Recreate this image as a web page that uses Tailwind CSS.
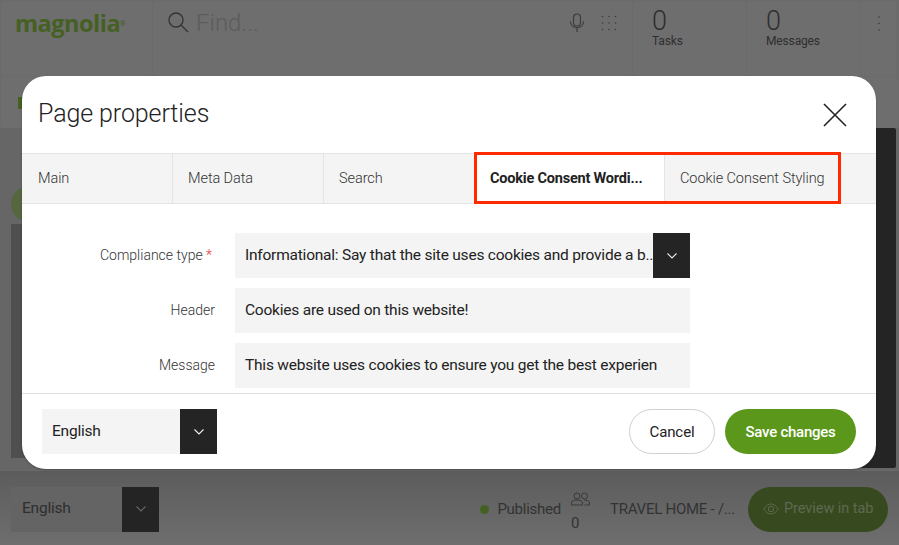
<!DOCTYPE html>
<html><head><meta charset="utf-8"><script src="https://cdn.jsdelivr.net/npm/@tailwindcss/browser@4"></script></head>
<body class="m-0">
<div class="relative w-[899px] h-[545px] overflow-hidden bg-[#6b6b6b] font-['Roboto',sans-serif] text-[#2e2e2e]">
  <!-- background app -->
  <div class="flex flex-col h-full">
    <div class="flex h-[76px] gap-px pt-px pl-px pr-[3px] shrink-0">
      <div class="w-[151px] rounded-[3px] bg-[#6e6e6e] pl-[14px] pt-[7px]">
        <span class="text-[23.500px] leading-[30px] font-bold tracking-[-0.5px] text-[#456023] font-['Open_Sans',sans-serif]">magnolia</span><span class="text-[7px] align-super text-[#456023]">®</span>
      </div>
      <div class="flex-1 flex items-start rounded-[3px] bg-[#6e6e6e] pl-[14px] pr-[15px] pt-[10px]">
        <svg class="w-[22px] h-[22px] mr-[7px]" viewBox="0 0 22 22" fill="none" stroke="#333" stroke-width="1.3"><circle cx="9" cy="9" r="7"/><path d="M14 14l7 7"/></svg>
        <span class="text-[24px] leading-[24px] font-light text-[#5c5c5c]">Find...</span>
        <div class="ml-auto flex items-start gap-[16px] pt-[2px]">
          <svg class="w-[16px] h-[20px]" viewBox="0 0 16 20" fill="none" stroke="#3d3d3d" stroke-width="1.2"><rect x="4.500" y="1" width="7" height="12" rx="3.500"/><path d="M1.500 8.500c0 8 13 8 13 0M8 15v4"/></svg>
          <svg class="w-[16px] h-[16px] mt-[2px]" viewBox="0 0 16 16" fill="#3d3d3d"><circle cx="1.500" cy="1.500" r=".8"/><circle cx="8" cy="1.500" r=".8"/><circle cx="14.500" cy="1.500" r=".8"/><circle cx="1.500" cy="8" r=".8"/><circle cx="8" cy="8" r=".8"/><circle cx="14.500" cy="8" r=".8"/><circle cx="1.500" cy="14.500" r=".8"/><circle cx="8" cy="14.500" r=".8"/><circle cx="14.500" cy="14.500" r=".8"/></svg>
        </div>
      </div>
      <div class="w-[113px] rounded-[3px] bg-[#6e6e6e] pl-[19px] pt-[8px]">
        <div class="text-[27px] leading-[25px] font-light">0</div><div class="text-[12px] leading-[15px] tracking-[-0.15px]">Tasks</div>
      </div>
      <div class="w-[113px] rounded-[3px] bg-[#6e6e6e] pl-[19px] pt-[8px]">
        <div class="text-[27px] leading-[25px] font-light">0</div><div class="text-[12px] leading-[15px] tracking-[-0.15px]">Messages</div>
      </div>
      <div class="w-[35px] rounded-[3px] bg-[#6e6e6e] flex justify-center pt-[15px]">
        <svg class="w-[2px] h-[15px]" viewBox="0 0 2 15" fill="#3d3d3d"><circle cx="1" cy="1" r=".8"/><circle cx="1" cy="7.500" r=".8"/><circle cx="1" cy="14" r=".8"/></svg>
      </div>
    </div>
    <div class="h-[51px] mt-px mx-px rounded-[3px] bg-[#6e6e6e] pl-[17px] pt-[20px] shrink-0">
      <div class="w-[10px] h-[12px] bg-[#456023]"></div>
    </div>
    <div class="flex-1 relative flex justify-end pr-[3px] pb-[2px] bg-[#666]">
      <div class="absolute left-[11px] top-[58px] w-[36px] h-[36px] rounded-full bg-[#56663f]"></div>
      <div class="absolute left-[11px] top-[96px] w-[40px] h-[234px] bg-[#4e504d]"></div>
      <div class="w-[40px] h-full rounded-[2px] bg-[#242424]"></div>
    </div>
    <div class="h-[75px] shrink-0 flex items-center pt-[2px] pl-[11px] pr-[11px] bg-gradient-to-b from-[#5c5c5c] to-[#6e6e6e] border-t border-[#6a6a6a]">
      <div class="flex h-[45px] w-[148px]">
        <div class="flex-1 bg-[#646464] pl-[11px] flex items-center text-[15.500px] tracking-[-0.22px]">English</div>
        <div class="w-[37px] bg-[#242424] flex items-center justify-center">
          <svg class="w-[10px] h-[6px]" viewBox="0 0 10 6" fill="none" stroke="#666" stroke-width="1.1"><path d="M.5.5L5 5 9.500.5"/></svg>
        </div>
      </div>
      <div class="ml-auto flex items-center text-[15px] tracking-[-0.25px]">
        <span class="w-[9px] h-[9px] rounded-full bg-[#456023] mr-[8px]"></span>
        <span class="text-[#333] mr-[10px]">Published</span>
        <div class="flex flex-col h-[45px] w-[20px] mr-[19px] leading-[18px] text-[#333] pt-[5px]">
          <svg class="w-[19px] h-[14px] mb-[8px] shrink-0" viewBox="0 0 19 14" fill="none" stroke="#3a3a3a" stroke-width="1"><circle cx="6" cy="4" r="3"/><circle cx="13.500" cy="4" r="3"/><path d="M.5 13v-2c0-2 2-3 5.500-3s5.500 1 5.500 3v2zM13 8c3.500 0 5.500 1 5.500 3v2h-5"/></svg>
          <span>0</span>
        </div>
        <span class="text-[#333] mr-[13px]">TRAVEL HOME - /...</span>
        <div class="flex items-center w-[140px] h-[45px] rounded-full bg-[#37491f] pl-[15px] text-[14.500px] tracking-[-0.05px] text-[#5e6a50]">
          <svg class="w-[16px] h-[12px] mr-[5px]" viewBox="0 0 16 12" fill="none" stroke="#5e6a50" stroke-width="1"><path d="M.8 6C3 2.500 5.300 1 8 1s5 1.500 7.200 5C13 9.500 10.700 11 8 11S3 9.500.8 6z"/><circle cx="8" cy="6" r="2.700"/></svg>
          Preview in tab
        </div>
      </div>
    </div>
  </div>

  <!-- modal -->
  <div class="absolute left-[22px] top-[76px] w-[854px] h-[393px] rounded-[24px] bg-white flex flex-col overflow-hidden shadow-[0_1px_2px_rgba(0,0,0,0.25)]">
    <div class="h-[77px] shrink-0 flex items-center justify-between pl-[16px] pr-[29px]">
      <h1 class="text-[25px] tracking-[-0.1px] font-light text-[#222] mb-[2px]">Page properties</h1>
      <svg class="w-[24px] h-[24px]" viewBox="0 0 24 24" fill="none" stroke="#222" stroke-width="1.600"><path d="M1 1l22 22M23 1L1 23"/></svg>
    </div>
    <div class="h-[51px] shrink-0 flex gap-px bg-[#e4e4e4] border-y border-[#e4e4e4] text-[14.500px] tracking-[-0.08px] font-light text-[#333]">
      <div class="w-[150px] bg-[#f4f4f4] pl-[16px] flex items-center">Main</div>
      <div class="w-[150px] bg-[#f4f4f4] pl-[15px] flex items-center">Meta Data</div>
      <div class="w-[150px] bg-[#f4f4f4] pl-[15px] flex items-center">Search</div>
      <div class="w-[190px] bg-white pl-[16px] flex items-center font-bold tracking-[-0.2px] text-[#222] -ml-px">Cookie Consent Wordi...</div>
      <div class="w-[175px] bg-[#f4f4f4] pl-[15px] flex items-center">Cookie Consent Styling</div>
      <div class="flex-1 bg-[#f4f4f4]"></div>
    </div>
    <div class="flex-1 pt-[29px] flex flex-col gap-[10px] overflow-hidden">
      <div class="flex items-center h-[45px]">
        <div class="w-[193px] pr-[3px] text-right text-[14px] font-light text-[#333]">Compliance type <span class="text-[#e53935]">*</span></div>
        <div class="ml-[20px] w-[455px] h-[45px] flex bg-[#f4f4f4]">
          <div class="flex-1 min-w-0 pl-[10px] pt-px flex items-center text-[15.500px] tracking-[-0.22px] text-[#222] whitespace-nowrap overflow-hidden">Informational: Say that the site uses cookies and provide a b...</div>
          <div class="w-[37px] shrink-0 bg-[#242424] flex items-center justify-center">
            <svg class="w-[10px] h-[6px]" viewBox="0 0 10 6" fill="none" stroke="#eee" stroke-width="1.1"><path d="M.5.5L5 5 9.500.5"/></svg>
          </div>
        </div>
      </div>
      <div class="flex items-center h-[45px]">
        <div class="w-[193px] text-right text-[14px] font-light text-[#333]">Header</div>
        <div class="ml-[20px] w-[455px] h-[45px] bg-[#f4f4f4] pl-[10px] pt-px flex items-center text-[15.500px] tracking-[-0.22px] text-[#222]">Cookies are used on this website!</div>
      </div>
      <div class="flex items-center h-[45px]">
        <div class="w-[193px] text-right text-[14px] font-light text-[#333]">Message</div>
        <div class="ml-[20px] w-[455px] h-[45px] bg-[#f4f4f4] pl-[10px] pt-px flex items-center text-[15.500px] tracking-[-0.22px] text-[#222]">This website uses cookies to ensure you get the best experien</div>
      </div>
    </div>
    <div class="h-[76px] shrink-0 border-t border-[#e0e0e0] flex items-center pl-[20px] pr-[20px]">
      <div class="flex h-[45px] w-[175px]">
        <div class="flex-1 bg-[#f4f4f4] pl-[10px] pt-px flex items-center text-[15.500px] tracking-[-0.22px] text-[#222]">English</div>
        <div class="w-[37px] bg-[#242424] flex items-center justify-center">
          <svg class="w-[10px] h-[6px]" viewBox="0 0 10 6" fill="none" stroke="#eee" stroke-width="1.1"><path d="M.5.5L5 5 9.500.5"/></svg>
        </div>
      </div>
      <button class="ml-auto w-[86px] h-[45px] pt-[2px] rounded-full border border-[#d0d0d0] text-[15px] tracking-[-0.1px] text-[#222]">Cancel</button>
      <button class="ml-[10px] w-[131px] h-[45px] pt-[2px] rounded-full bg-[#5b971a] text-[15px] tracking-[-0.25px] font-medium text-white">Save changes</button>
    </div>
  </div>
  <!-- annotation -->
  <div class="absolute left-[474px] top-[152px] w-[367px] h-[52px] border-[3px] border-[#ff2a00]"></div>
</div>
</body></html>
